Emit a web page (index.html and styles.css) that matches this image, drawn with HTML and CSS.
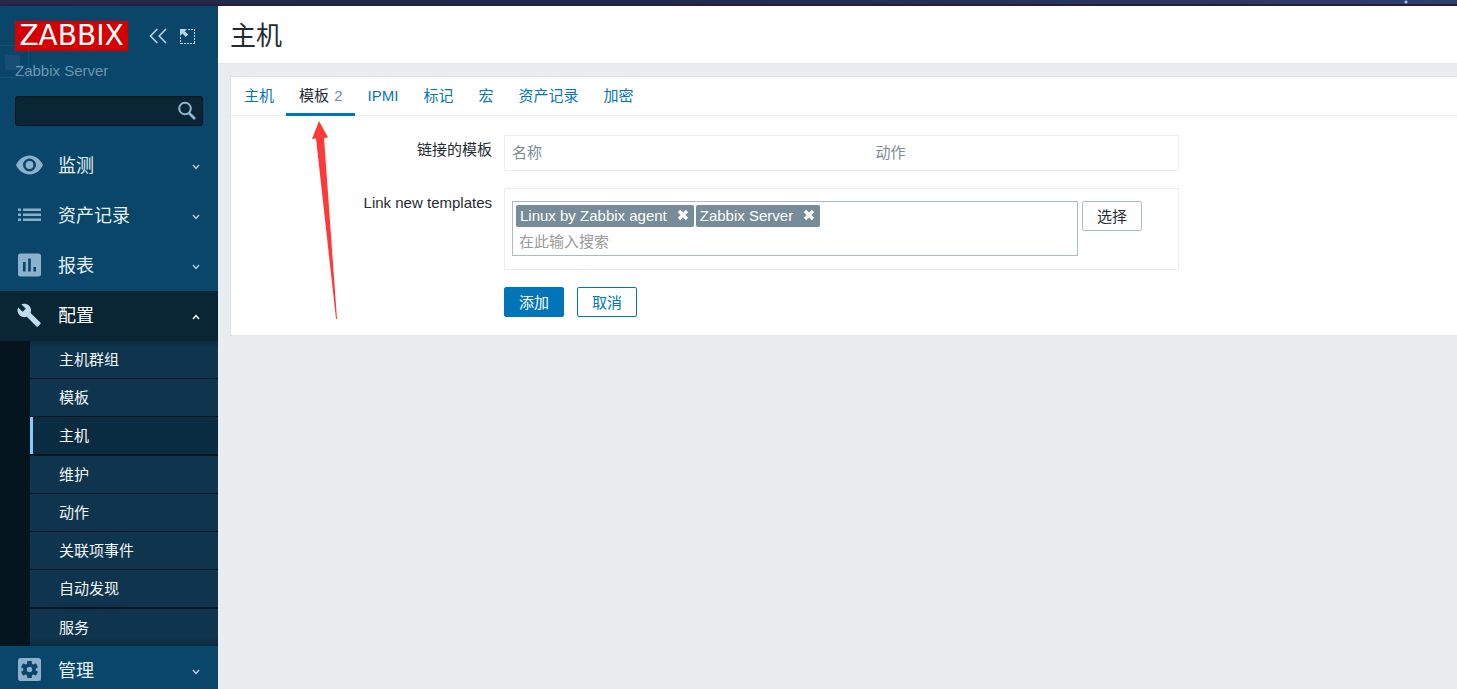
FILE: index.html
```html
<!DOCTYPE html>
<html lang="zh-CN">
<head>
<meta charset="utf-8">
<title>主机</title>
<link rel="stylesheet" href="styles.css">
</head>
<body>
<div class="backdrop"></div>
<div class="layout">
  <aside class="sidebar">
    <svg class="ghost" width="30" height="36" viewBox="0 0 30 36" aria-hidden="true"><path d="M0 1.500h28.500v32H0" fill="none" stroke="#fff" stroke-opacity=".04"/><rect x="5" y="11" width="15" height="15" rx="2" fill="#fff" fill-opacity=".05"/></svg>
    <header class="brand">
      <div class="brand-row">
        <a class="logo" href="#">ZABBIX</a>
        <button class="icon-btn" type="button" aria-label="收起侧栏"><svg width="20" height="18" viewBox="0 0 20 18" fill="none" stroke="#b9d2e4" stroke-width="1.600"><path d="M9.300 2 2.500 9l6.800 7M18 2l-6.800 7 6.800 7"/></svg></button>
        <button class="icon-btn" type="button" aria-label="隐藏侧栏"><svg width="17" height="17" viewBox="0 0 17 17" fill="none" stroke="#b9d2e4"><path d="M9 1.500h7M15.500 1v15M16 15.500H1M1.500 9v7" stroke-dasharray="2 1"/><path d="M1 1h7L5.800 3.200l3.400 3.400-2.400 2.400-3.400-3.400L1 8z" fill="#b9d2e4" stroke="none"/></svg></button>
      </div>
      <div class="server">Zabbix Server</div>
      <form class="search">
        <input type="text" aria-label="搜索">
        <button type="button" aria-label="搜索"><svg width="20" height="20" viewBox="0 0 20 20" fill="none" stroke="#8fb5cf"><circle cx="8" cy="7.500" r="5.800" stroke-width="2"/><path d="M12 12l6 6" stroke-width="2.600"/></svg></button>
      </form>
    </header>
    <nav>
      <a class="item" href="#"><svg class="ico" viewBox="0 0 30 30"><path fill-rule="evenodd" fill="#8cb1cc" d="M1 15C4 9 9 5.500 14.500 5.500S25 9 28 15c-3 6-8 9.500-13.500 9.500S4 21 1 15zm13.500-6.500a6.500 6.500 0 1 0 0 13 6.500 6.500 0 0 0 0-13z"/><circle cx="14.500" cy="15" r="3.900" fill="#8cb1cc"/></svg><span>监测</span><svg class="chev" viewBox="0 0 8 6"><path d="M1 1l3 3.500L7 1"/></svg></a>
      <a class="item" href="#"><svg class="ico" viewBox="0 0 30 30" fill="#8cb1cc"><path d="M3 8.500h3v2.500H3zM8 8.500h18v2.500H8zM3 13.500h3v2.500H3zM8 13.500h18v2.500H8zM3 18.500h3v2.500H3zM8 18.500h18v2.500H8z"/></svg><span>资产记录</span><svg class="chev" viewBox="0 0 8 6"><path d="M1 1l3 3.500L7 1"/></svg></a>
      <a class="item" href="#"><svg class="ico" viewBox="0 0 30 30"><rect x="3" y="3.500" width="23" height="23" rx="2.500" fill="#8cb1cc"/><path d="M8 12h2.600v9.500H8zM13.200 8.500h2.600v13h-2.600zM18.400 17H21v4.500h-2.600z" fill="#0a466a"/></svg><span>报表</span><svg class="chev" viewBox="0 0 8 6"><path d="M1 1l3 3.500L7 1"/></svg></a>
      <a class="item open" href="#"><svg class="ico" viewBox="0 0 30 30"><path transform="translate(2.800 3.600) scale(.95)" fill="#c0dcf0" d="M23.700 20 13.500 9.800c1-2.600.4-5.600-1.700-7.700C9.600-.1 6.300-.5 3.700.7l4.700 4.700-3.300 3.300L.3 4C-.9 6.600-.4 9.900 1.800 12.100c2.100 2.100 5.100 2.700 7.700 1.700l10.200 10.200c.4.4 1.100.4 1.600 0l2.500-2.500c.5-.4.500-1.100-.1-1.500z"/></svg><span>配置</span><svg class="chev" viewBox="0 0 8 6"><path d="M1 5l3-3.500L7 5"/></svg></a>
      <ul class="sub">
        <li><a href="#">主机群组</a></li>
        <li><a href="#">模板</a></li>
        <li class="group-end"><a class="current" href="#">主机</a></li>
        <li><a href="#">维护</a></li>
        <li><a href="#">动作</a></li>
        <li><a href="#">关联项事件</a></li>
        <li class="group-end"><a href="#">自动发现</a></li>
        <li><a href="#">服务</a></li>
      </ul>
      <a class="item" href="#"><svg class="ico" viewBox="0 0 30 30"><rect x="3" y="3" width="23" height="23" rx="2.500" fill="#8cb1cc"/><g transform="translate(14.500 14.500)" fill="#0a466a"><circle r="6.300"/><rect x="-2.300" y="-8.600" width="4.600" height="17.200" rx=".6"/><rect x="-2.300" y="-8.600" width="4.600" height="17.200" rx=".6" transform="rotate(60)"/><rect x="-2.300" y="-8.600" width="4.600" height="17.200" rx=".6" transform="rotate(120)"/><circle r="2.700" fill="#8cb1cc"/></g></svg><span>管理</span><svg class="chev" viewBox="0 0 8 6"><path d="M1 1l3 3.500L7 1"/></svg></a>
    </nav>
  </aside>
  <main class="main">
    <header class="title"><h1>主机</h1></header>
    <section class="panel">
      <nav class="tabs">
        <a href="#">主机</a>
        <a class="active" href="#">模板 <span>2</span></a>
        <a href="#">IPMI</a>
        <a href="#">标记</a>
        <a href="#">宏</a>
        <a href="#">资产记录</a>
        <a href="#">加密</a>
      </nav>
      <form class="form">
        <div class="label">链接的模板</div>
        <div class="box linked">
          <table><thead><tr><th class="name">名称</th><th>动作</th></tr></thead></table>
        </div>
        <label class="label" for="templates">Link new templates</label>
        <div class="box picker">
          <div class="multi">
            <div class="tags">
              <span class="tag">Linux by Zabbix agent<button type="button" aria-label="移除"><svg width="12" height="12" viewBox="0 0 12 12"><path d="M2 2l8 8M10 2l-8 8" stroke="#fff" stroke-width="3.200"/></svg></button></span>
              <span class="tag">Zabbix Server<button type="button" aria-label="移除"><svg width="12" height="12" viewBox="0 0 12 12"><path d="M2 2l8 8M10 2l-8 8" stroke="#fff" stroke-width="3.200"/></svg></button></span>
            </div>
            <input id="templates" type="text" placeholder="在此输入搜索">
          </div>
          <button class="btn grey" type="button">选择</button>
        </div>
        <div class="actions">
          <button class="btn primary" type="button">添加</button>
          <button class="btn" type="button">取消</button>
        </div>
      </form>
    </section>
  </main>
</div>
<svg class="arrow" width="30" height="200" viewBox="0 0 30 200" aria-hidden="true"><path d="M9 1 18 17.500l-4 .5L27 199h-1L6 18.500l-4 .5z" fill="#fc3a3a"/></svg>
</body>
</html>
```
FILE: styles.css
```css
* { box-sizing: border-box; }
html { overflow: hidden; }
body {
  margin: 0;
  min-height: 100vh;
  display: flex;
  flex-direction: column;
  position: relative;
  background: #e9edf0;
  color: #1f2c33;
  font: 15px/20px "Liberation Sans", "Noto Sans CJK SC", sans-serif;
}
a { text-decoration: none; }
button, input { font: inherit; }
.backdrop {
  height: 6px;
  flex: none;
  border-bottom: 2px solid #281c42;
  background: radial-gradient(circle at 1406px 2px, #a6c3ea 0, #a6c3ea 1px, transparent 2px), linear-gradient(90deg, #222a48, #20294a 45%, #2c406b);
}
.layout { display: flex; flex: 1; }
.sidebar { position: relative; width: 218px; flex: none; background: #0a466a; }
.ghost { position: absolute; left: 0; top: 38px; }
.brand { padding: 15px; }
.brand-row { display: flex; align-items: center; height: 30px; }
.logo {
  width: 113px;
  flex: none;
  height: 30px;
  margin-right: 20px;
  background: #d40000;
  color: #fff;
  font: 28px/30px "DejaVu Sans", sans-serif;
  text-align: center;
}
.icon-btn { display: flex; flex: none; padding: 0; border: 0; background: none; }
.icon-btn + .icon-btn { margin-left: 11px; }
.server { margin: 10px 0 15px; color: #6d96b0; }
.search {
  display: flex;
  align-items: center;
  height: 30px;
  background: #0a2635;
  border: 1px solid #03121b;
  border-radius: 3px;
}
.search input { flex: 1; min-width: 0; border: 0; background: none; color: #fff; outline: 0; }
.search button { display: flex; padding: 0; margin-right: 5px; border: 0; background: none; }
.item {
  display: flex;
  align-items: center;
  height: 50px;
  padding: 0 18px 0 15px;
  color: #e6f1f8;
  font-size: 18px;
}
.item span { flex: 1; }
.ico { width: 30px; height: 30px; margin: 0 13px 2px 0; }
.chev { width: 8px; height: 6px; margin-top: 2px; fill: none; stroke: #b9d2e4; stroke-width: 1.4px; }
.item.open { background: #0a2635; color: #fff; }
.open .chev { stroke: #fff; }
.sub {
  display: flex;
  flex-direction: column;
  gap: 1px;
  margin: 0;
  padding: 0 0 0 30px;
  list-style: none;
  background: #04151d;
}
.sub a { display: block; padding: 0 29px; line-height: 37px; background: #0f344d; color: #f2f8fc; }
.sub a.current { padding-left: 26px; border-left: 3px solid #80ccff; background: #0a2c40; color: #fff; }
.group-end { margin-bottom: 1px; }
.sub li:first-child a { background: linear-gradient(#0c2c42, #0f344d 8px); }
.sub li:last-child a { background: linear-gradient(#0f344d 27px, #0c2a3e); }
.main { flex: 1; min-width: 0; }
.title { padding: 10px 12px 7px; background: #fff; border-bottom: 1px solid #dfe4e7; }
h1 { margin: 0; font-size: 26px; line-height: 40px; font-weight: 400; }
.panel { margin: 12px 0 0 12px; background: #fff; border: 1px solid #dfe4e7; border-right: 0; }
.tabs { display: flex; border-bottom: 1px solid #ebeef0; }
.tabs a { padding: 9px 12px 7px 13px; line-height: 20px; border-bottom: 3px solid transparent; margin-bottom: -1px; color: #0275b8; }
.tabs .active { color: #1f2c33; border-color: #0275b8; }
.tabs span { margin-left: 1px; color: #768d99; }
.form {
  display: grid;
  grid-template-columns: minmax(140px, 261px) minmax(0, 675px);
  gap: 17px 12px;
  padding: 19px 0 18px;
}
.label { text-align: right; padding-top: 5px; }
.box { border: 1px solid #ebeef0; }
table { width: 100%; border-collapse: collapse; }
th { padding: 7px; text-align: left; font-weight: 400; color: #768d99; }
.name { width: 54%; }
.picker { display: flex; align-items: flex-start; gap: 4px; padding: 12px 36px 13px 7px; }
.multi { flex: 1; min-width: 0; border: 1px solid #acbbc2; padding: 3px; }
.tags { display: flex; flex-wrap: wrap; gap: 2px; }
.tag { display: flex; align-items: center; height: 22px; padding: 0 5px 0 4px; background: #768d99; border-radius: 2px; color: #fff; }
.tag button { display: flex; padding: 0; margin: 0 0 2px 10px; border: 0; background: none; }
.multi input { display: block; width: 100%; height: 22px; margin-top: 3px; padding: 0 3px; border: 0; outline: 0; background: none; }
.multi input::placeholder { color: #9a9a9a; }
.btn { height: 30px; padding: 1px 14px 0; border: 1px solid #0275b8; border-radius: 2px; background: #fff; color: #0275b8; }
.btn.grey { border-color: #acbbc2; color: #1f2c33; }
.btn.primary { background: #0275b8; color: #fff; }
.actions { grid-column: 2; display: flex; gap: 13px; }
.arrow { position: absolute; left: 310px; top: 120px; }
```
